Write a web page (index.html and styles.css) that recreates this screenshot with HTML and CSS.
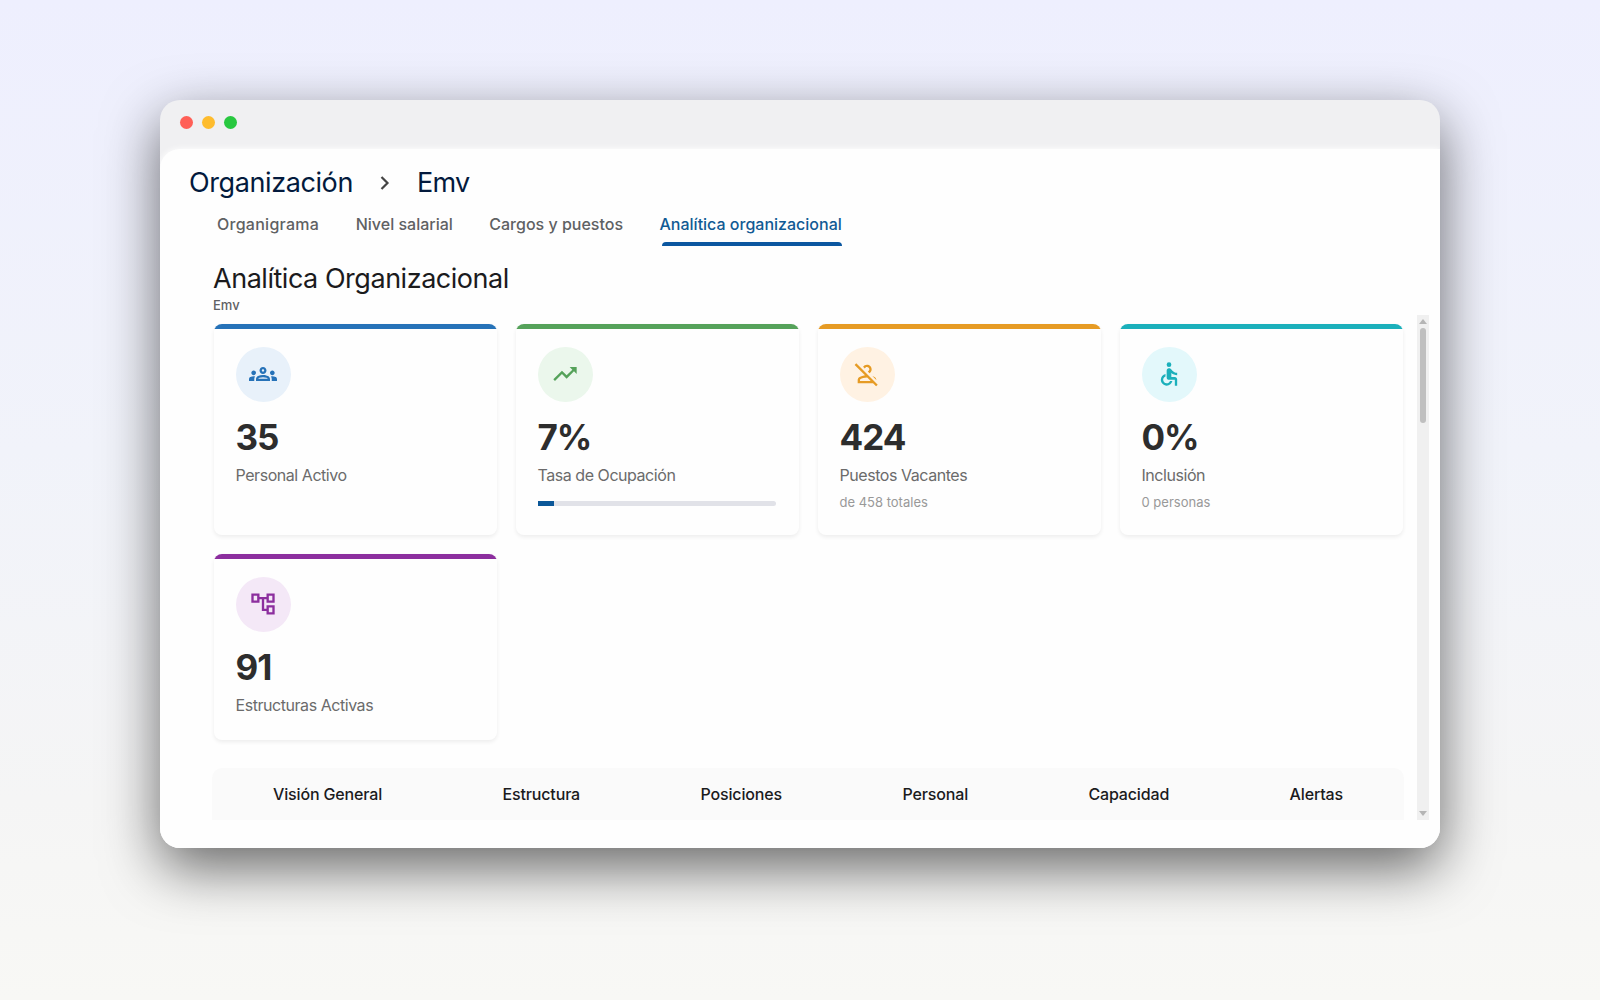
FILE: index.html
```html
<!DOCTYPE html>
<html lang="es">
  <head>
    <meta charset="UTF-8" />
    <meta name="viewport" content="width=device-width, initial-scale=1.0" />
    <title>Analítica Organizacional</title>
    <link rel="stylesheet" href="styles.css">
  </head>
  <body>
    <div class="window">
      <div class="titlebar">
        <span class="dot red"></span>
        <span class="dot yellow"></span>
        <span class="dot green"></span>
      </div>
      <div class="app">
        <div class="breadcrumb">
          <span class="crumb-root">Organización</span>
          <svg class="chevron" viewBox="0 0 10 16"><path d="M1.5 2 L7.5 8 L1.5 14" /></svg>
          <span class="crumb-current">Emv</span>
        </div>
        <nav class="tabs">
          <a class="tab">Organigrama</a>
          <a class="tab">Nivel salarial</a>
          <a class="tab">Cargos y puestos</a>
          <a class="tab active">Analítica organizacional</a>
        </nav>
        <h1>Analítica Organizacional</h1>
        <p class="subtitle">Emv</p>
        <div class="scroll-area">
          <div class="content">
            <div class="cards">
              <div class="card blue">
                <div class="icon">
                  <svg viewBox="0 0 24 24"><path d="M4 13c1.1 0 2-.9 2-2s-.9-2-2-2-2 .9-2 2 .9 2 2 2zm1.13 1.1c-.37-.06-.74-.1-1.13-.1-.99 0-1.93.21-2.78.58C.48 14.9 0 15.62 0 16.43V18h4.5v-1.61c0-.83.23-1.61.63-2.29zM20 13c1.1 0 2-.9 2-2s-.9-2-2-2-2 .9-2 2 .9 2 2 2zm4 3.43c0-.81-.48-1.53-1.22-1.85-.85-.37-1.79-.58-2.78-.58-.39 0-.76.04-1.13.1.4.68.63 1.46.63 2.29V18H24v-1.57zm-7.76-2.78c-1.17-.52-2.61-.9-4.24-.9s-3.07.39-4.24.9C6.68 14.13 6 15.21 6 16.39V18h12v-1.61c0-1.18-.68-2.26-1.76-2.74zM8.07 16c.09-.23.13-.39.91-.69.97-.38 1.99-.56 3.02-.56s2.05.18 3.02.56c.77.3.81.46.91.69H8.07zM12 8c.55 0 1 .45 1 1s-.45 1-1 1-1-.45-1-1 .45-1 1-1m0-2c-1.66 0-3 1.34-3 3s1.34 3 3 3 3-1.34 3-3-1.34-3-3-3z" /></svg>
                </div>
                <div class="value">35</div>
                <div class="label">Personal Activo</div>
              </div>
              <div class="card green-card">
                <div class="icon">
                  <svg viewBox="0 0 24 24"><path d="M16 6l2.29 2.29-4.88 4.88-4-4L2 16.59 3.41 18l6-6 4 4 6.3-6.29L22 12V6z" /></svg>
                </div>
                <div class="value">7%</div>
                <div class="label">Tasa de Ocupación</div>
                <div class="progress"><div class="progress-fill" style="width: 7%"></div></div>
              </div>
              <div class="card orange">
                <div class="icon">
                  <svg viewBox="0 0 24 24"><path d="M20 17.17l-3.37-3.38c.64.22 1.23.48 1.77.76.97.51 1.58 1.52 1.6 2.62zm1.19 4.02l-1.41 1.41-2.61-2.6H4v-2.78c0-1.12.61-2.15 1.61-2.66 1.29-.66 2.87-1.22 4.67-1.45L1.39 4.22 2.8 2.81l18.39 18.38zM15.17 18l-3-3H12c-2.37 0-4.29.73-5.48 1.34-.32.16-.52.5-.52.88V18h9.17zM12 6c1.1 0 2 .9 2 2 0 .86-.54 1.59-1.3 1.87l1.48 1.48C15.28 10.64 16 9.4 16 8c0-2.21-1.79-4-4-4-1.4 0-2.64.72-3.35 1.82l1.48 1.48C10.41 6.54 11.14 6 12 6z" /></svg>
                </div>
                <div class="value">424</div>
                <div class="label">Puestos Vacantes</div>
                <div class="note">de 458 totales</div>
              </div>
              <div class="card teal">
                <div class="icon">
                  <svg viewBox="0 0 24 24"><circle cx="12" cy="4" r="2" /><path d="M19 13v-2c-1.54.02-3.09-.75-4.07-1.83l-1.29-1.43c-.17-.19-.38-.34-.61-.45-.01 0-.01-.01-.02-.01H13c-.35-.2-.75-.3-1.19-.26C10.76 7.11 10 8.04 10 9.09V15c0 1.1.9 2 2 2h5v5h2v-5.5c0-1.1-.9-2-2-2h-3v-3.45c1.29 1.07 3.25 1.94 5 1.95zm-6.17 5c-.41 1.16-1.52 2-2.83 2-1.66 0-3-1.34-3-3 0-1.31.84-2.41 2-2.83V12.1c-2.28.46-4 2.48-4 4.9 0 2.76 2.24 5 5 5 2.42 0 4.44-1.72 4.9-4h-2.07z" /></svg>
                </div>
                <div class="value">0%</div>
                <div class="label">Inclusión</div>
                <div class="note">0 personas</div>
              </div>
              <div class="card purple">
                <div class="icon">
                  <svg viewBox="0 0 24 24"><path d="M22 11V3h-7v3H9V3H2v8h7V8h2v10h4v3h7v-8h-7v3h-2V8h2v3h7zM7 9H4V5h3v4zm10 6h3v4h-3v-4zm0-10h3v4h-3V5z" /></svg>
                </div>
                <div class="value">91</div>
                <div class="label">Estructuras Activas</div>
              </div>
            </div>
            <div class="sections">
              <span>Visión General</span>
              <span>Estructura</span>
              <span>Posiciones</span>
              <span>Personal</span>
              <span>Capacidad</span>
              <span>Alertas</span>
            </div>
          </div>
          <div class="scrollbar">
            <svg class="arrow" viewBox="0 0 8 5"><path d="M4 0 L8 5 H0z" /></svg>
            <div class="thumb"></div>
            <svg class="arrow" viewBox="0 0 8 5"><path d="M0 0 H8 L4 5z" /></svg>
          </div>
        </div>
      </div>
    </div>
  </body>
</html>
```
FILE: styles.css
```css
* {
  margin: 0;
  padding: 0;
  box-sizing: border-box;
}

body {
  height: 1000px;
  padding: 100px 160px 0;
  overflow: hidden;
  background: linear-gradient(#eeeffe, #f1f3fa 45%, #f5f5f5 80%, #f8f8f5);
  font-family: "Inter", sans-serif;
}

.window {
  height: 748px;
  background: #f0f0f2;
  border-radius: 20px;
  box-shadow: 0 20px 56px rgba(0, 0, 0, 0.58);
  overflow: hidden;
}

.titlebar {
  height: 49px;
  display: flex;
  gap: 9px;
  padding: 16px 20px;
}

.dot {
  width: 13px;
  height: 13px;
  border-radius: 50%;
}

.red {
  background: #ff5f57;
}

.yellow {
  background: #febc2e;
}

.green {
  background: #28c840;
}

.app {
  height: 699px;
  background: #fefefe;
  border-radius: 20px 0 0 0;
  box-shadow: 0 0 6px #fefefe;
}

.breadcrumb {
  display: flex;
  align-items: center;
  height: 67px;
  padding-left: 29px;
  font-size: 27px;
  color: #031a3d;
}

.crumb-root {
  width: 164px;
  letter-spacing: -0.4px;
}

.crumb-current {
  letter-spacing: -0.8px;
}

.chevron {
  width: 10px;
  height: 16px;
  margin: 0 27px;
  fill: none;
  stroke: #444;
  stroke-width: 2.2;
}

.tabs {
  display: flex;
  gap: 36.5px;
  height: 30px;
  padding-left: 57px;
  font-size: 16px;
  font-weight: 500;
  line-height: 17px;
  color: #5f6163;
}

.tab:first-child {
  letter-spacing: 0.27px;
}

.active {
  color: #115a94;
}

.active::after {
  content: "";
  display: block;
  width: 180px;
  height: 4px;
  margin: 9px 0 0 2px;
  border-radius: 4px 4px 0 0;
  background: #0b57a0;
}

h1 {
  margin-top: 14px;
  padding-left: 53px;
  height: 36px;
  line-height: 37px;
  font-size: 27px;
  font-weight: 400;
  letter-spacing: -0.47px;
  color: #1b1b1d;
}

.subtitle {
  height: 19px;
  padding-left: 53px;
  font-size: 13px;
  line-height: 19px;
  font-weight: 500;
  color: #5f6163;
}

.scroll-area {
  display: flex;
  height: 505px;
  padding-left: 52px;
}

.content {
  width: 1192px;
  padding-top: 9px;
}

.cards {
  display: grid;
  grid-template-columns: repeat(4, 283px);
  grid-template-rows: 211px 186px;
  gap: 19px;
  padding-left: 1.5px;
}

.card {
  padding: 0 23px 0 22px;
  border-radius: 8px;
  box-shadow: 0 2px 4px rgba(0, 0, 0, 0.07);
  overflow: hidden;
}

.card::before {
  content: "";
  display: block;
  height: 5px;
  margin: 0 -23px 17.5px -22px;
  background: currentColor;
}

.blue {
  color: #2672b8;
}

.green-card {
  color: #55a25a;
}

.orange {
  color: #e69b24;
}

.teal {
  color: #1bb0bb;
}

.purple {
  color: #8c2e9e;
}

.icon {
  width: 55px;
  height: 55px;
  display: flex;
  align-items: center;
  justify-content: center;
  border-radius: 50%;
}

.icon svg {
  width: 28px;
  height: 28px;
  fill: currentColor;
}

.blue .icon {
  background: #e8f1fa;
}

.green-card .icon {
  background: #ebf7ec;
}

.orange .icon {
  background: #fff2e3;
}

.teal .icon {
  background: #e3f8fb;
}

.purple .icon {
  background: #f4e8f7;
}

.value {
  margin-top: 13.5px;
  height: 44px;
  line-height: 44px;
  font-size: 35px;
  font-weight: 700;
  letter-spacing: -1px;
  color: #2d2d2d;
}

.label {
  margin-top: 4px;
  height: 24px;
  line-height: 24px;
  font-size: 16px;
  letter-spacing: -0.45px;
  color: #6b6b6b;
}

.note {
  margin-top: 6px;
  font-size: 13px;
  line-height: 18px;
  color: #999;
}

.progress {
  height: 5px;
  margin-top: 14px;
  border-radius: 0 3px 3px 0;
  background: #e1e2e8;
}

.progress-fill {
  height: 5px;
  background: #0b5798;
}

.sections {
  display: flex;
  justify-content: space-between;
  height: 52px;
  margin-top: 28px;
  padding: 0 61px;
  border-radius: 10px 10px 0 0;
  background: #fafafa;
  font-size: 16px;
  font-weight: 500;
  line-height: 52px;
  letter-spacing: -0.15px;
  color: #1b1b1d;
}

.scrollbar {
  display: flex;
  flex-direction: column;
  align-items: center;
  width: 12px;
  margin-left: 13px;
  padding: 4px 0;
  background: #f0f0f0;
}

.thumb {
  width: 6px;
  height: 95px;
  margin: 4px 0 auto;
  border-radius: 3px;
  background: #bfbfbf;
}

.arrow {
  width: 8px;
  height: 5px;
  fill: #b5b5b5;
}
```
